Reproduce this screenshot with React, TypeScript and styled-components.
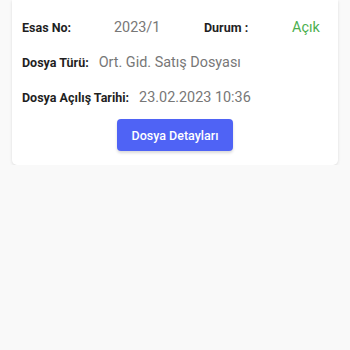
import styled, { createGlobalStyle } from "styled-components";

const GlobalStyle = createGlobalStyle`
    html, body {
        margin: 0;
        padding: 0;
        background-color: #f9f9f9;
        font-family: Roboto, "Noto Sans", sans-serif;
    }
`;

const file = {
    esasNo: "2023/1",
    durum: "Açık",
    tur: "Ort. Gid. Satış Dosyası",
    tarih: "23.02.2023 10:36",
};

export default function App() {
    return (
        <>
            <GlobalStyle />
            <Page>
                <Card>
                    <TopRow>
                        <Label>Esas No:</Label>
                        <Value>{file.esasNo}</Value>
                        <Label>Durum :</Label>
                        <Value $color="#4caf50">{file.durum}</Value>
                    </TopRow>
                    <Row>
                        <Label>Dosya Türü:</Label>
                        <Value>{file.tur}</Value>
                    </Row>
                    <Row>
                        <Label>Dosya Açılış Tarihi:</Label>
                        <Value>{file.tarih}</Value>
                    </Row>
                    <Actions>
                        <Button>Dosya Detayları</Button>
                    </Actions>
                </Card>
            </Page>
        </>
    );
}

const Page = styled.div`
    padding: 0 12px;
`;

const Card = styled.div`
    background-color: #ffffff;
    border-radius: 0 0 5px 5px;
    box-shadow: 0 1px 3px rgba(0, 0, 0, 0.12);
    padding: 16px 10px 14px 10px;
    display: flex;
    flex-direction: column;
`;

const TopRow = styled.div`
    display: grid;
    grid-template-columns: 92px 90px 88px auto;
    align-items: center;
    height: 22px;
`;

const Row = styled.div`
    display: flex;
    align-items: center;
    gap: 10px;
    height: 22px;
    margin-top: 13px;
`;

const Label = styled.span`
    font-size: 12.5px;
    font-weight: 700;
    color: #1f1f1f;
    white-space: nowrap;
`;

const Value = styled.span<{ $color?: string }>`
    font-size: 14.4px;
    color: ${(p) => p.$color || "#777777"};
    white-space: nowrap;
`;

const Actions = styled.div`
    display: flex;
    justify-content: center;
    margin-top: 11px;
`;

const Button = styled.button`
    font-family: Roboto, "Noto Sans", sans-serif;
    font-size: 12.5px;
    font-weight: 500;
    color: #ffffff;
    background-color: #4f63f5;
    border: none;
    border-radius: 4px;
    width: 116px;
    height: 32px;
    box-shadow: 0 2px 3px rgba(0, 0, 0, 0.15);
    cursor: pointer;
`;
